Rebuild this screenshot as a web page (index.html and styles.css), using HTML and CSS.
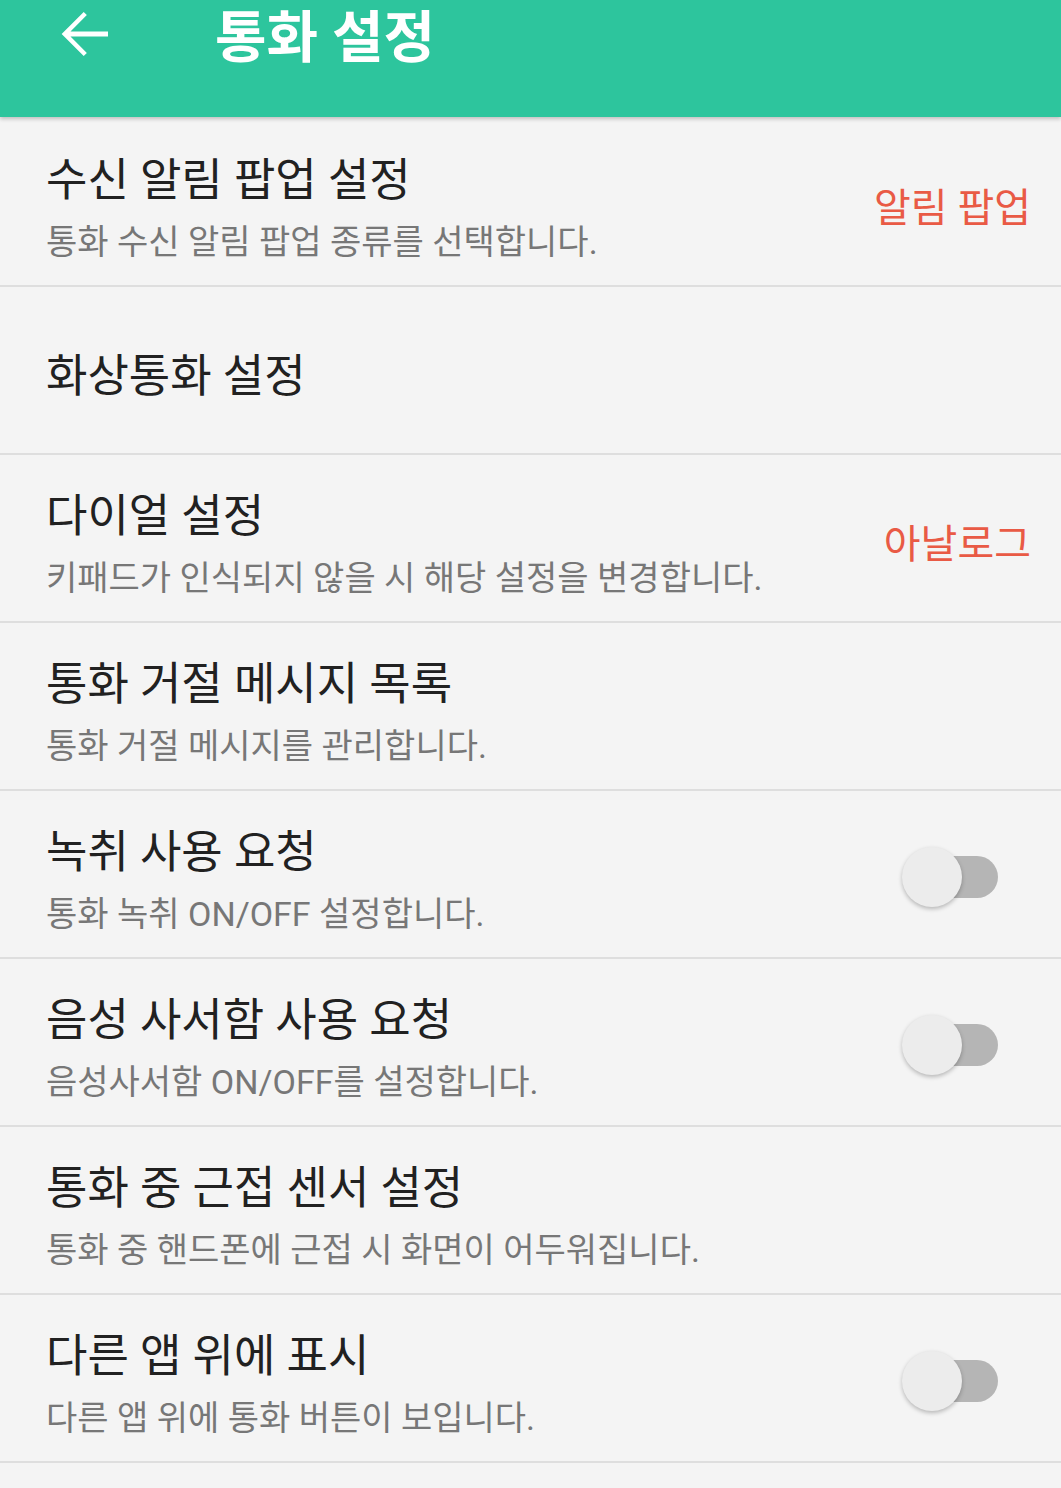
FILE: index.html
```html
<!DOCTYPE html>
<html lang="ko">
<head>
<meta charset="utf-8">
<title>통화 설정</title>
<link rel="stylesheet" href="styles.css">
</head>
<body>
<header class="appbar">
  <div class="appbar-row">
    <svg class="back" width="72" height="72" viewBox="0 0 24 24" aria-hidden="true"><path fill="#fff" d="M20 11.15H7.5l5.45-5.45L11.9 4.65 4.55 12l7.35 7.35 1.05-1.05-5.45-5.45H20v-1.7z"/></svg>
    <h1 class="appbar-title">통화 설정</h1>
  </div>
</header>
<main class="list">
  <div class="row">
    <div class="row-text">
      <div class="row-title">수신 알림 팝업 설정</div>
      <div class="row-sub">통화 수신 알림 팝업 종류를 선택합니다.</div>
    </div>
    <div class="row-value">알림 팝업</div>
  </div>
  <div class="row">
    <div class="row-text">
      <div class="row-title">화상통화 설정</div>
    </div>
  </div>
  <div class="row">
    <div class="row-text">
      <div class="row-title">다이얼 설정</div>
      <div class="row-sub">키패드가 인식되지 않을 시 해당 설정을 변경합니다.</div>
    </div>
    <div class="row-value">아날로그</div>
  </div>
  <div class="row">
    <div class="row-text">
      <div class="row-title">통화 거절 메시지 목록</div>
      <div class="row-sub">통화 거절 메시지를 관리합니다.</div>
    </div>
  </div>
  <div class="row">
    <div class="row-text">
      <div class="row-title">녹취 사용 요청</div>
      <div class="row-sub">통화 녹취 ON/OFF 설정합니다.</div>
    </div>
    <div class="switch"><span class="track"></span><span class="thumb"></span></div>
  </div>
  <div class="row">
    <div class="row-text">
      <div class="row-title">음성 사서함 사용 요청</div>
      <div class="row-sub">음성사서함 ON/OFF를 설정합니다.</div>
    </div>
    <div class="switch"><span class="track"></span><span class="thumb"></span></div>
  </div>
  <div class="row">
    <div class="row-text">
      <div class="row-title">통화 중 근접 센서 설정</div>
      <div class="row-sub">통화 중 핸드폰에 근접 시 화면이 어두워집니다.</div>
    </div>
  </div>
  <div class="row">
    <div class="row-text">
      <div class="row-title">다른 앱 위에 표시</div>
      <div class="row-sub">다른 앱 위에 통화 버튼이 보입니다.</div>
    </div>
    <div class="switch"><span class="track"></span><span class="thumb"></span></div>
  </div>
</main>
</body>
</html>
```
FILE: styles.css
```css
html, body {
  margin: 0;
  padding: 0;
}
body {
  background: #f4f4f4;
  font-family: Roboto, "Noto Sans CJK KR", sans-serif;
  width: 1061px;
  height: 1488px;
  overflow: hidden;
}
.appbar {
  height: 117px;
  background: #2dc59d;
  box-shadow: 0 2px 4px rgba(0, 0, 0, 0.22);
  position: relative;
  z-index: 1;
}
.appbar-row {
  height: 76px;
  display: flex;
  align-items: center;
  padding-left: 48px;
}
.back {
  display: block;
  flex: none;
  margin-bottom: 8px;
}
.appbar-title {
  margin: 0 0 0 95px;
  color: #fff;
  font-size: 56px;
  font-weight: 700;
  line-height: 76px;
}
.list {
  padding-top: 2px;
}
.row {
  box-sizing: border-box;
  height: 168px;
  border-bottom: 2px solid #dedede;
  display: flex;
  align-items: center;
  padding: 14px 0 0 46px;
}
.row-text {
  flex: 1;
  min-width: 0;
}
.row-title {
  font-size: 45px;
  line-height: 52px;
  color: #212121;
}
.row-sub {
  margin-top: 13px;
  font-size: 34px;
  line-height: 44px;
  color: #777;
}
.row-value {
  font-size: 40px;
  line-height: 50px;
  color: #e95a45;
  margin-right: 30px;
}
.switch {
  position: relative;
  width: 96px;
  height: 60px;
  margin-right: 63px;
  margin-top: -8px;
}
.track {
  position: absolute;
  right: 0;
  top: 9px;
  width: 84px;
  height: 42px;
  border-radius: 21px;
  background: #b5b5b5;
}
.thumb {
  position: absolute;
  left: 0;
  top: 0;
  width: 60px;
  height: 60px;
  border-radius: 50%;
  background: #ececec;
  box-shadow: 0 2px 4px rgba(0, 0, 0, 0.25);
}
```
